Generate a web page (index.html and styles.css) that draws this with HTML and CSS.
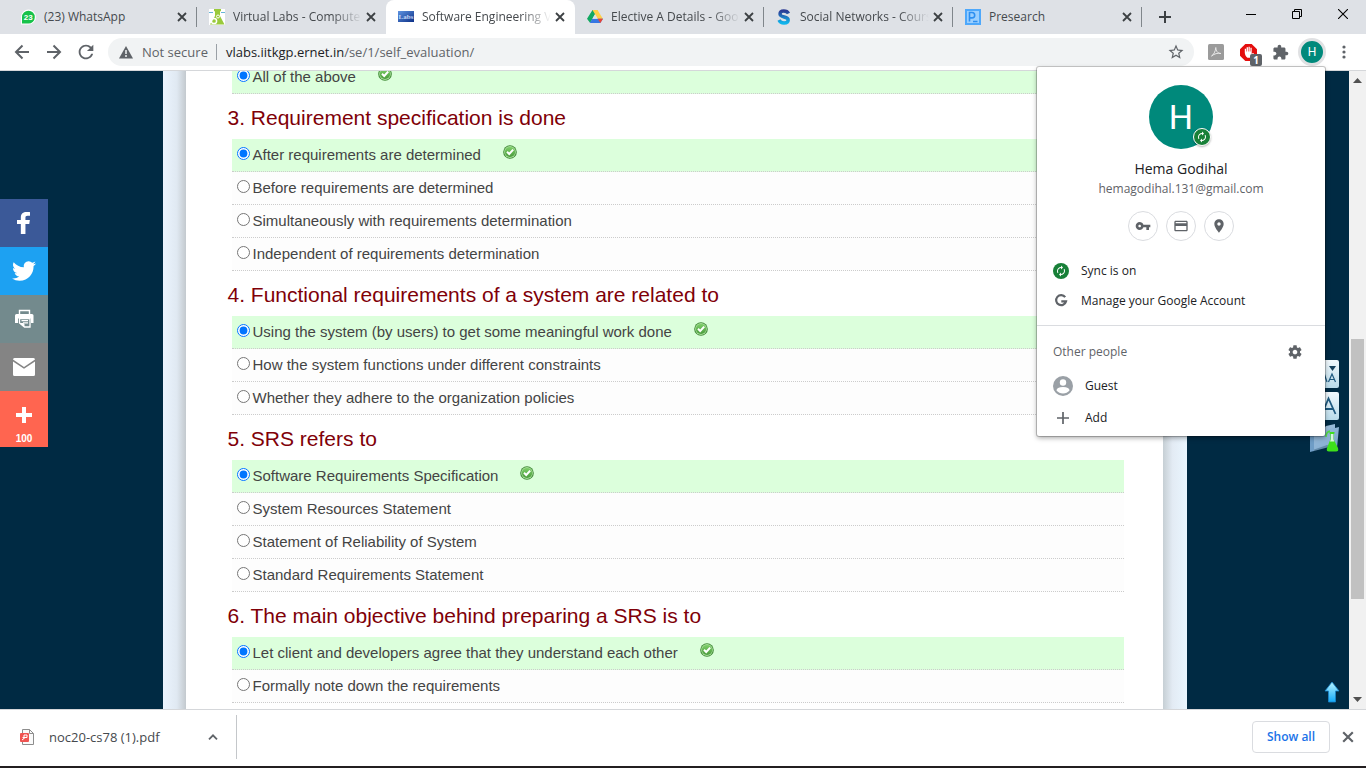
FILE: index.html
```html
<!DOCTYPE html>
<html lang="en">
<head>
<meta charset="utf-8">
<title>Software Engineering Virtual Lab</title>
<link rel="stylesheet" href="styles.css">
</head>
<body>
<svg class="defs" width="0" height="0" aria-hidden="true">
  <defs>
    <linearGradient id="gCheck" x1="0" y1="0" x2="0" y2="1"><stop offset="0" stop-color="#7ed06a"/><stop offset="1" stop-color="#4a9a3c"/></linearGradient>
    <linearGradient id="gArrow" x1="0" y1="0" x2="0" y2="1"><stop offset="0" stop-color="#b8f4ff"/><stop offset="1" stop-color="#10a8f8"/></linearGradient>
    <linearGradient id="gBox" x1="0" y1="0" x2="0" y2="1"><stop offset="0" stop-color="#f2f9fd"/><stop offset="1" stop-color="#b9dbea"/></linearGradient>
    <linearGradient id="gFolder" x1="0" y1="0" x2="1" y2="1"><stop offset="0" stop-color="#b5d0e6"/><stop offset="1" stop-color="#6d9cc4"/></linearGradient>
    <linearGradient id="gLabs" x1="0" y1="0" x2="1" y2="1"><stop offset="0" stop-color="#5f94e2"/><stop offset="1" stop-color="#0b2f86"/></linearGradient>
    <linearGradient id="gSwayam" x1="0" y1="0" x2="0" y2="1"><stop offset="0" stop-color="#2d3c95"/><stop offset="1" stop-color="#10b5ec"/></linearGradient>
    <symbol id="x" viewBox="0 0 10 10"><path d="M1 1l8 8M9 1l-8 8" fill="none" stroke="currentColor" stroke-width="1.8"/></symbol>
    <symbol id="check" viewBox="0 0 14 14"><circle cx="7" cy="7" r="6.8" fill="#3f8a35"/><circle cx="7" cy="7" r="5.9" fill="#a5dc98"/><circle cx="7" cy="7" r="5.1" fill="url(#gCheck)"/><path d="M4 6.800l2.200 2.200L10.200 4.600" fill="none" stroke="#fff" stroke-width="2"/></symbol>
    <symbol id="sync" viewBox="0 0 24 24"><path fill="currentColor" d="M12 6v3l4-4-4-4v3c-4.420 0-8 3.580-8 8 0 1.570.460 3.030 1.240 4.260L6.700 14.800c-.450-.830-.700-1.790-.700-2.800 0-3.310 2.690-6 6-6zm6.760 1.740L17.300 9.200c.440.840.700 1.790.700 2.800 0 3.310-2.690 6-6 6v-3l-4 4 4 4v-3c4.420 0 8-3.580 8-8 0-1.570-.460-3.030-1.240-4.260z"/></symbol>
  </defs>
</svg>

<header class="tabstrip">
  <nav class="tabs" aria-label="Tabs">
    <div class="tab">
      <svg class="favicon" viewBox="0 0 16 16"><path d="M1 15.500V8a7.500 7.500 0 1 1 7.500 7.500z" fill="#fff"/><path d="M2 14.500V8a6.400 6.400 0 1 1 6.400 6.500z" fill="#17c24a"/><text x="8.200" y="11" text-anchor="middle" class="fav-num">23</text></svg>
      <a class="tab-title" href="#">(23) WhatsApp</a>
      <button class="tab-close" aria-label="Close"><svg width="10" height="10"><use href="#x"/></svg></button>
    </div>
    <div class="tab tab-before-active">
      <svg class="favicon" viewBox="0 0 16 16"><path fill="#fff" d="M0 0h16v16H0z"/><path d="M0 3.500h4M12 3.500h4" stroke="#66b5d8"/><path d="M5 0h7v2l-1 .5v4.500l4.500 8.500H1L6 7V2.500L5 2z" fill="#9aca3c"/><circle cx="5" cy="12" r="2.600" fill="none" stroke="#fff" stroke-width="1.500"/><circle cx="9" cy="7.500" r="1.500" fill="none" stroke="#fff"/></svg>
      <a class="tab-title tab-title-long" href="#">Virtual Labs - Compute</a>
      <button class="tab-close" aria-label="Close"><svg width="10" height="10"><use href="#x"/></svg></button>
    </div>
    <div class="tab tab-active">
      <svg class="favicon" viewBox="0 0 16 16"><path fill="url(#gLabs)" d="M0 2h16v11H0z"/><text x="8" y="10" text-anchor="middle" class="fav-labs">Labs</text></svg>
      <a class="tab-title tab-title-long" href="#">Software Engineering V</a>
      <button class="tab-close" aria-label="Close"><svg width="10" height="10"><use href="#x"/></svg></button>
    </div>
    <div class="tab">
      <svg class="favicon" viewBox="0 0 16 16"><path d="M5.500 1h5L8 5.300 3.200 14 0 9.800z" fill="#11a861"/><path d="M5.500 1h5L16 10h-5.200z" fill="#ffcf48"/><path d="M5.300 9.800H16L13.300 14H2.800z" fill="#3777e3"/><path d="M5.300 9.800L8 5.300l2.700 4.500z" fill="#dee1e6"/><path d="M10.700 9.800H16L13.300 14z" fill="#ea4335"/></svg>
      <a class="tab-title tab-title-long" href="#">Elective A Details - Goo</a>
      <button class="tab-close" aria-label="Close"><svg width="10" height="10"><use href="#x"/></svg></button>
    </div>
    <div class="tab">
      <svg class="favicon" viewBox="0 0 16 16"><path d="M12.500 4.500C11.500 2.500 9.500 2 7.800 2 5.500 2 4 3.200 4 5c0 4 8.200 2 8.200 6 0 2-1.700 3-4.200 3-2.200 0-4-.700-5-3" fill="none" stroke="url(#gSwayam)" stroke-width="3.400"/></svg>
      <a class="tab-title tab-title-long" href="#">Social Networks - Cours</a>
      <button class="tab-close" aria-label="Close"><svg width="10" height="10"><use href="#x"/></svg></button>
    </div>
    <div class="tab">
      <svg class="favicon" viewBox="0 0 16 16"><path fill="#4ea8fb" d="M0 0h16v16H0z"/><path d="M2 2h12v12H2z" fill="#9bcfff"/><path d="M4.500 12.500v-9H7a2.700 2.700 0 0 1 0 5.400H5M8 12.500h4.500" fill="none" stroke="#2d8ff0" stroke-width="1.600"/></svg>
      <a class="tab-title" href="#">Presearch</a>
      <button class="tab-close" aria-label="Close"><svg width="10" height="10"><use href="#x"/></svg></button>
    </div>
    <button class="new-tab" aria-label="New tab"><svg width="12" height="12" viewBox="0 0 12 12"><path d="M6 0v12M0 6h12" stroke="#3c4043" stroke-width="2"/></svg></button>
  </nav>
  <div class="window-controls">
    <button aria-label="Minimize"><svg width="10" height="10"><path d="M0 5.500h10" stroke="#000"/></svg></button>
    <button aria-label="Restore"><svg width="10" height="10"><path d="M.5 2.500h7v7h-7zM2.500 2.500v-2h7v7h-2" fill="none" stroke="#000"/></svg></button>
    <button aria-label="Close window"><svg width="10" height="10"><path d="M0 0l10 10M10 0L0 10" stroke="#000" stroke-width="1.100"/></svg></button>
  </div>
</header>

<div class="toolbar">
  <div class="tool-group">
    <button class="tool" aria-label="Back"><svg width="16" height="16" viewBox="0 0 16 16"><path d="M15 8H2M8.500 1.500L2 8l6.500 6.500" fill="none" stroke="#5f6368" stroke-width="2"/></svg></button>
    <button class="tool" aria-label="Forward"><svg width="16" height="16" viewBox="0 0 16 16"><path d="M1 8h13M7.500 1.500L14 8l-6.500 6.500" fill="none" stroke="#5f6368" stroke-width="2"/></svg></button>
    <button class="tool" aria-label="Reload"><svg width="22" height="22" viewBox="0 0 24 24"><path fill="#5f6368" d="M17.650 6.350C16.200 4.900 14.210 4 12 4c-4.420 0-7.990 3.580-7.990 8s3.570 8 7.990 8c3.730 0 6.840-2.550 7.730-6h-2.080c-.820 2.330-3.040 4-5.650 4-3.310 0-6-2.690-6-6s2.690-6 6-6c1.660 0 3.140.690 4.220 1.780L13 11h7V4l-2.350 2.350z"/></svg></button>
  </div>
  <div class="omnibox">
    <svg width="14" height="14" viewBox="0 0 14 14"><path d="M7 1l7 12.500H0z" fill="#5f6368"/><path d="M7 5v4M7 10v2" stroke="#f1f3f4" stroke-width="1.500"/></svg>
    <span class="insecure">Not secure</span>
    <span class="url"><span class="url-host">vlabs.iitkgp.ernet.in</span>/se/1/self_evaluation/</span>
    <button class="star" aria-label="Bookmark this page"><svg width="18" height="18" viewBox="0 0 24 24"><path fill="#5f6368" d="M22 9.240l-7.190-.620L12 2 9.190 8.630 2 9.240l5.460 4.730L5.820 21 12 17.270 18.180 21l-1.630-7.030L22 9.240zM12 15.400l-3.760 2.270 1-4.280-3.320-2.880 4.380-.380L12 6.100l1.710 4.040 4.380.380-3.320 2.880 1 4.280L12 15.400z"/></svg></button>
  </div>
  <div class="tool-group">
    <button class="tool" aria-label="PDF extension"><svg width="16" height="16" viewBox="0 0 16 16"><rect width="16" height="16" rx="1.500" fill="#9b9b9b"/><path d="M3.500 12c2-1 4-4.500 4.300-8.500C8 7 9.500 9.500 13 9.500c-3.500-.8-6.500.3-9.500 2.500z" fill="none" stroke="#e9e9e9"/></svg></button>
    <button class="tool tool-badged" aria-label="Ad blocker"><svg width="17" height="17" viewBox="0 0 16 16"><path d="M5 0h6l5 5v6l-5 5H5l-5-5V5z" fill="#e40d0d"/><path d="M4.500 8V4.500h1.200V7h.5V3h1.300v4H8V2.500h1.200V7h.6V3.500H11v6.200l1-1.200 1.200.5L10.500 13H7c-1.500-1-2.500-3-2.500-5z" fill="#fff"/></svg><span class="badge">1</span></button>
    <button class="tool" aria-label="Extensions"><svg width="17" height="17" viewBox="0 0 24 24"><path fill="#5f6368" d="M20.500 11H19V7c0-1.100-.900-2-2-2h-4V3.500C13 2.120 11.880 1 10.500 1S8 2.120 8 3.500V5H4c-1.100 0-1.990.900-1.990 2v3.800H3.500c1.490 0 2.700 1.210 2.700 2.700s-1.210 2.700-2.700 2.700H2V20c0 1.100.900 2 2 2h3.800v-1.500c0-1.490 1.210-2.700 2.700-2.700 1.490 0 2.700 1.210 2.700 2.700V22H17c1.100 0 2-.900 2-2v-4h1.500c1.380 0 2.500-1.120 2.500-2.500S21.880 11 20.500 11z"/></svg></button>
    <button class="tool" aria-label="Profile"><span class="avatar avatar-small">H</span></button>
    <button class="tool" aria-label="Menu"><svg width="4" height="14" viewBox="0 0 4 14"><g fill="#5f6368"><circle cx="2" cy="2" r="1.600"/><circle cx="2" cy="7" r="1.600"/><circle cx="2" cy="12" r="1.600"/></g></svg></button>
  </div>
</div>

<div class="viewport">
  <div class="page">
    <aside class="share" aria-label="Share">
      <a class="share-fb" href="#" aria-label="Facebook"><svg width="32" height="32" viewBox="0 0 32 32"><path fill="#fff" d="M22 5.160c-.406-.054-1.806-.160-3.430-.160-3.400 0-5.733 1.825-5.733 5.170v2.882H9v3.913h3.837V27h4.604V16.965h3.823l.587-3.913h-4.410v-2.500c0-1.123.347-1.903 2.198-1.903H22V5.160z"/></svg></a>
      <a class="share-tw" href="#" aria-label="Twitter"><svg width="32" height="32" viewBox="0 0 32 32"><path fill="#fff" d="M28 8.557a9.913 9.913 0 0 1-2.828.775 4.930 4.930 0 0 0 2.166-2.725 9.738 9.738 0 0 1-3.130 1.194 4.920 4.920 0 0 0-3.593-1.550 4.924 4.924 0 0 0-4.794 6.049c-4.090-.210-7.720-2.170-10.150-5.150a4.942 4.942 0 0 0-.665 2.477c0 1.710.870 3.214 2.190 4.100a4.968 4.968 0 0 1-2.230-.616v.060c0 2.390 1.700 4.380 3.952 4.830-.414.115-.850.174-1.297.174-.318 0-.626-.030-.928-.086a4.935 4.935 0 0 0 4.600 3.420 9.893 9.893 0 0 1-6.114 2.107c-.398 0-.790-.023-1.175-.068a13.953 13.953 0 0 0 7.550 2.213c9.056 0 14.010-7.507 14.010-14.013 0-.213-.005-.426-.015-.637.960-.695 1.795-1.560 2.455-2.550z"/></svg></a>
      <a class="share-print" href="#" aria-label="Print"><svg width="32" height="32" viewBox="0 0 32 32"><path d="M11.500 11V7.500h10V11" fill="none" stroke="#fff" stroke-width="1.400"/><path fill="#fff" d="M7 12.500Q7 11 8.500 11h15.500q1.500 0 1.500 1.500V20H23v-4.500H10V20H7z"/><path d="M11.500 15.500h10.500V24h-5.500l-5-4z" fill="#738a8d" stroke="#fff" stroke-width="1.300"/><path d="M13.500 17.700h6.500M15 19.900h5" stroke="#fff" stroke-width="1.200"/><path d="M11.500 20h3.500q1.500 0 1.500 1.500V24z" fill="#fff"/></svg></a>
      <a class="share-mail" href="#" aria-label="Email"><svg width="32" height="32" viewBox="0 0 32 32"><path fill="#fff" d="M5 8.500Q5 7 6.500 7h19Q27 7 27 8.500L16 16z"/><path fill="#fff" d="M5 10.500l11 7.300 11-7.300V23.500q0 1.500-1.500 1.500h-19Q5 25 5 23.500z"/></svg></a>
      <a class="share-more" href="#"><svg width="16" height="16" viewBox="0 0 16 16"><path d="M8 0v16M0 8h16" stroke="#fff" stroke-width="4"/></svg><span>100</span></a>
    </aside>

    <div class="shell">
      <main class="quiz">
        <form>
          <fieldset>
            <label class="option correct"><input type="radio" name="q2" checked>All of the above<svg class="check"><use href="#check"/></svg></label>
          </fieldset>
          <fieldset>
            <legend>3. Requirement specification is done</legend>
            <label class="option correct"><input type="radio" name="q3" checked>After requirements are determined<svg class="check"><use href="#check"/></svg></label>
            <label class="option"><input type="radio" name="q3">Before requirements are determined</label>
            <label class="option"><input type="radio" name="q3">Simultaneously with requirements determination</label>
            <label class="option"><input type="radio" name="q3">Independent of requirements determination</label>
          </fieldset>
          <fieldset>
            <legend>4. Functional requirements of a system are related to</legend>
            <label class="option correct"><input type="radio" name="q4" checked>Using the system (by users) to get some meaningful work done<svg class="check"><use href="#check"/></svg></label>
            <label class="option"><input type="radio" name="q4">How the system functions under different constraints</label>
            <label class="option"><input type="radio" name="q4">Whether they adhere to the organization policies</label>
          </fieldset>
          <fieldset>
            <legend>5. SRS refers to</legend>
            <label class="option correct"><input type="radio" name="q5" checked>Software Requirements Specification<svg class="check"><use href="#check"/></svg></label>
            <label class="option"><input type="radio" name="q5">System Resources Statement</label>
            <label class="option"><input type="radio" name="q5">Statement of Reliability of System</label>
            <label class="option"><input type="radio" name="q5">Standard Requirements Statement</label>
          </fieldset>
          <fieldset>
            <legend>6. The main objective behind preparing a SRS is to</legend>
            <label class="option correct"><input type="radio" name="q6" checked>Let client and developers agree that they understand each other<svg class="check"><use href="#check"/></svg></label>
            <label class="option"><input type="radio" name="q6">Formally note down the requirements</label>
          </fieldset>
        </form>
      </main>
    </div>

    <div class="side-tools">
      <button aria-label="Smaller text"><svg width="28" height="28" viewBox="0 0 28 28"><rect width="28" height="28" rx="2" fill="url(#gBox)"/><path d="M18 6h7l-3.500 5z" fill="#17415c"/><path d="M17.500 22l3.500-8 3.500 8M18.500 19.500h5M8 22l4-12 4 12M9.500 18h5" fill="none" stroke="#1f5a80" stroke-width="1.200"/></svg></button>
      <button aria-label="Normal text"><svg width="28" height="28" viewBox="0 0 28 28"><rect width="28" height="28" rx="2" fill="url(#gBox)"/><path d="M11 22l6.500-15.500L24.500 22M13.500 17h8.500" fill="none" stroke="#1f5a80" stroke-width="1.800"/></svg></button>
      <button class="resources" aria-label="Lab resources"><svg width="30" height="30" viewBox="0 0 30 30"><path d="M1 9l14-4 2-2 9-2v4l4-1-2 21-10-3-17 6z" fill="url(#gFolder)"/><path d="M1 9l4 1v18l-4 1z" fill="#6f9dc6"/><path d="M5 10l21-5-2 18-19 5z" fill="#8db4d6" opacity=".7"/><path d="M20.500 9h5v1.500l-1 .5v5l4.500 9q1 3.500-2 3.500h-7q-3 0-2-3.500l3.500-9v-5l-1-.5z" fill="#3ee01a"/><path d="M22 11h2.300v5l1 2.500h-4.300l1-2.500z" fill="#d6f5de"/><path d="M17 14q0-5 4-6" fill="none" stroke="#4fe040" stroke-width="1.500"/></svg></button>
    </div>
    <a class="to-top" href="#" aria-label="Back to top"><svg width="16" height="22" viewBox="0 0 16 22"><path d="M8 1l7 9h-3.500v11h-7V10H1z" fill="url(#gArrow)" stroke="#1b86cc" stroke-width=".8"/></svg></a>
  </div>
  <div class="scrollbar" aria-hidden="true">
    <svg width="9" height="5"><path d="M0 5l4.500-5L9 5z" fill="#505050"/></svg>
    <div class="track"><div class="thumb"></div></div>
    <svg width="9" height="5"><path d="M0 0l4.500 5L9 0z" fill="#505050"/></svg>
  </div>
</div>

<footer class="shelf">
  <button class="download"><svg width="14" height="16" viewBox="0 0 14 16"><path d="M2.500.5h7l4 4v11h-11z" fill="#fafafa" stroke="#8d8d8d"/><path d="M9.500.5v4h4" fill="none" stroke="#8d8d8d"/><rect y="4" width="9" height="9" rx="1" fill="#ef5350"/><path d="M2 11l2-1.500M4 10V6h3v2.500H2.500" fill="none" stroke="#fff"/></svg><span>noc20-cs78 (1).pdf</span></button>
  <button class="chevron" aria-label="Download options"><svg width="10" height="6" viewBox="0 0 10 6"><path d="M1 5.300l4-4 4 4" fill="none" stroke="#5f6368" stroke-width="1.800"/></svg></button>
  <button class="show-all">Show all</button>
  <button class="shelf-close" aria-label="Close downloads"><svg width="12" height="12"><use href="#x"/></svg></button>
</footer>

<section class="profile" aria-label="Profile">
  <div class="profile-card">
    <div class="avatar avatar-large">H<span class="sync-badge"><svg width="12" height="12"><use href="#sync"/></svg></span></div>
    <h2>Hema Godihal</h2>
    <p>hemagodihal.131@gmail.com</p>
    <div class="shortcuts">
      <button aria-label="Passwords"><svg width="16" height="16" viewBox="0 0 24 24"><path fill="#5f6368" d="M12.650 10C11.830 7.670 9.610 6 7 6c-3.310 0-6 2.690-6 6s2.690 6 6 6c2.610 0 4.830-1.670 5.650-4H17v4h4v-4h2v-4H12.650zM7 14c-1.100 0-2-.900-2-2s.900-2 2-2 2 .900 2 2-.900 2-2 2z"/></svg></button>
      <button aria-label="Payment methods"><svg width="16" height="16" viewBox="0 0 24 24"><path fill="#5f6368" d="M20 4H4c-1.110 0-1.990.890-1.990 2L2 18c0 1.110.890 2 2 2h16c1.110 0 2-.890 2-2V6c0-1.110-.890-2-2-2zm0 14H4v-6h16v6zm0-10H4V6h16v2z"/></svg></button>
      <button aria-label="Addresses"><svg width="16" height="16" viewBox="0 0 24 24"><path fill="#5f6368" d="M12 2C8.130 2 5 5.130 5 9c0 5.250 7 13 7 13s7-7.750 7-13c0-3.870-3.130-7-7-7zm0 9.500c-1.380 0-2.500-1.120-2.500-2.500s1.120-2.500 2.500-2.500 2.500 1.120 2.500 2.500-1.120 2.500-2.500 2.500z"/></svg></button>
    </div>
  </div>
  <div class="account-links">
    <button><span class="sync-dot"><svg width="12" height="12"><use href="#sync"/></svg></span>Sync is on</button>
    <button><svg width="16" height="16" viewBox="0 0 16 16"><path d="M12.200 4.200A5 5 0 1 0 13 8.400H8.300" fill="none" stroke="#5f6368" stroke-width="2.200"/></svg>Manage your Google Account</button>
  </div>
  <div class="people">
    <div class="people-head"><span>Other people</span><button aria-label="Manage people"><svg width="16" height="16" viewBox="0 0 24 24"><path fill="#5f6368" d="M19.430 12.980c.040-.320.070-.640.070-.980s-.030-.660-.070-.980l2.110-1.650c.190-.150.240-.420.120-.640l-2-3.460c-.120-.220-.390-.300-.610-.220l-2.490 1c-.520-.400-1.080-.730-1.690-.980l-.380-2.650C14.460 2.180 14.250 2 14 2h-4c-.250 0-.460.180-.490.420l-.380 2.650c-.610.250-1.170.590-1.690.980l-2.490-1c-.230-.090-.490 0-.610.220l-2 3.460c-.130.220-.070.490.120.640l2.110 1.650c-.040.320-.070.650-.070.980s.030.660.070.980l-2.110 1.650c-.190.150-.240.420-.120.640l2 3.460c.120.220.390.300.610.220l2.490-1c.520.400 1.080.730 1.690.980l.380 2.650c.030.240.240.420.490.420h4c.250 0 .460-.180.490-.420l.380-2.650c.610-.250 1.170-.590 1.690-.980l2.490 1c.230.090.490 0 .610-.220l2-3.460c.120-.220.070-.490-.120-.640l-2.110-1.650zM12 15.500c-1.930 0-3.500-1.570-3.500-3.500s1.570-3.500 3.500-3.500 3.500 1.570 3.500 3.500-1.570 3.500-3.500 3.500z"/></svg></button></div>
    <button class="person"><svg width="20" height="20" viewBox="0 0 20 20"><circle cx="10" cy="10" r="10" fill="#9aa0a6"/><circle cx="10" cy="6.500" r="3.200" fill="#fff"/><path d="M3.500 14.500q0-3.500 6.500-3.500t6.500 3.500Q14 17.500 10 17.500t-6.500-3z" fill="#fff"/></svg>Guest</button>
    <button class="person"><svg width="20" height="20" viewBox="0 0 20 20"><path d="M10 4v12M4 10h12" stroke="#5f6368" stroke-width="1.700"/></svg>Add</button>
  </div>
</section>
</body>
</html>
```
FILE: styles.css
```css
* {
  box-sizing: border-box;
}

body {
  position: relative;
  display: flex;
  flex-direction: column;
  height: 100vh;
  margin: 0;
  overflow: hidden;
  color: #202124;
  font-family: "Open Sans", "Noto Sans", sans-serif;
  font-size: 12px;
  line-height: 16px;
}

button {
  display: flex;
  align-items: center;
  justify-content: center;
  padding: 0;
  border: 0;
  background: none;
  color: inherit;
  font: inherit;
}

a {
  color: inherit;
  text-decoration: none;
}

.defs {
  position: absolute;
}

/* Tab strip */
.tabstrip {
  display: flex;
  flex: none;
  justify-content: space-between;
  height: 34px;
  background: #dee1e6;
}

.tabs {
  display: flex;
  flex: 1;
  padding-left: 8px;
}

.tab {
  display: flex;
  flex: 0 1 189px;
  align-items: center;
  gap: 8px;
  min-width: 0;
  padding: 0 8px 0 12px;
  background: linear-gradient(#80868b, #80868b) right center / 1px 20px no-repeat;
  color: #45494d;
}

.tab-active {
  border-radius: 8px 8px 0 0;
  background: #fff;
}

.tab-before-active {
  background: none;
}

.favicon {
  flex: none;
  width: 16px;
  height: 16px;
}

.fav-num {
  fill: #fff;
  font: bold 8px "Liberation Sans", sans-serif;
}

.fav-labs {
  fill: #c5d8f7;
  font: bold 7px "Liberation Serif", serif;
}

.tab-title {
  flex: 1;
  min-width: 0;
  overflow: hidden;
  white-space: nowrap;
}

.tab-title-long {
  margin-right: -8px;
  mask-image: linear-gradient(90deg, #000 calc(100% - 32px), transparent calc(100% - 2px));
}

.tab-close {
  flex: none;
  width: 14px;
  height: 16px;
  color: #3c4043;
}

.new-tab {
  width: 28px;
  height: 34px;
  margin-left: 9px;
}

.window-controls {
  display: flex;
  height: 28px;
}

.window-controls button {
  width: 46px;
}

/* Toolbar */
.toolbar {
  display: flex;
  flex: none;
  align-items: center;
  gap: 6px;
  height: 37px;
  padding: 0 6px;
  border-bottom: 1px solid #d5d7da;
  background: #fff;
}

.tool-group {
  display: flex;
}

.tool {
  width: 32px;
  height: 28px;
}

.tool-badged {
  position: relative;
}

.badge {
  position: absolute;
  right: 2px;
  bottom: 0;
  width: 12px;
  height: 12px;
  border-radius: 2px;
  background: #5f6368;
  color: #fff;
  font-size: 10px;
  font-weight: 700;
  line-height: 12px;
}

.omnibox {
  display: flex;
  flex: 1;
  align-items: center;
  height: 28px;
  padding: 0 9px 0 11px;
  border-radius: 14px;
  background: #f1f3f4;
  color: #5f6368;
  font-size: 13px;
  line-height: 20px;
}

.insecure {
  margin-left: 9px;
  padding-right: 8px;
  border-right: 1px solid #9aa0a6;
  line-height: 16px;
}

.url {
  flex: 1;
  margin-left: 9px;
}

.url-host {
  color: #202124;
}

.avatar {
  display: flex;
  align-items: center;
  justify-content: center;
  border-radius: 50%;
  background: #00897b;
  color: #fff;
  font-family: Roboto, sans-serif;
}

.avatar-small {
  width: 28px;
  height: 28px;
  border: 3px solid #e0e1e3;
  font-size: 12px;
}

/* Page */
.viewport {
  display: flex;
  flex: 1;
  min-height: 0;
}

.page {
  position: relative;
  flex: 1;
  overflow: hidden;
  background: #002a43;
}

.shell {
  max-width: 1024px;
  height: 100%;
  margin: 0 auto;
  padding: 0 24px 0 23px;
  background:
    linear-gradient(90deg, #ebf4fe, #e0e9f2 60%, #c3c9ce) left / 23px 100% no-repeat,
    linear-gradient(270deg, #eaf6ff, #e3ebf4 60%, #c6cfd4) right / 24px 100% no-repeat;
}

.quiz {
  display: flow-root;
  height: 100%;
  padding: 0 39px 0 42px;
  background: #fff;
  color: #444;
  font-family: "Liberation Sans", Arial, sans-serif;
  font-size: 15px;
}

.quiz form {
  margin-top: -10px;
}

fieldset {
  min-width: 0;
  margin: 0;
  padding: 0;
  border: 0;
}

legend {
  display: block;
  height: 45px;
  padding: 0;
  color: #800008;
  font-size: 21px;
  line-height: 48px;
  white-space: nowrap;
}

.option {
  display: flex;
  align-items: center;
  height: 33px;
  margin-left: 4px;
  padding-left: 5px;
  border-bottom: 1px dotted #ccc;
  background: #fdfdfd;
}

.option.correct {
  background: #dcffdc;
}

.option input {
  width: 13px;
  height: 13px;
  margin: 0 3px 3px 0;
}

.check {
  width: 14px;
  height: 14px;
  margin: 0 0 6px 22px;
}

.share {
  position: absolute;
  top: 128px;
  left: 0;
  width: 48px;
}

.share a {
  display: flex;
  flex-direction: column;
  align-items: center;
  justify-content: center;
  height: 48px;
}

.share-fb {
  background: #3b5998;
}

.share-tw {
  background: #1da1f2;
}

.share-print {
  background: #738a8d;
}

.share-mail {
  background: #848484;
}

.share a.share-more {
  gap: 9px;
  height: 56px;
  padding-top: 15px;
  background: #ff6550;
  color: #fff;
  font: bold 10px/14px "Liberation Sans", Arial, sans-serif;
}

.side-tools {
  position: absolute;
  top: 289px;
  right: 10px;
  display: flex;
  flex-direction: column;
  gap: 4px;
  align-items: flex-end;
}

.side-tools .resources {
  height: 28px;
}

.to-top {
  position: absolute;
  right: 9px;
  bottom: 6px;
  display: flex;
}

.scrollbar {
  display: flex;
  flex-direction: column;
  align-items: center;
  width: 17px;
  padding: 7px 0;
  background: #f1f1f1;
}

.track {
  flex: 1;
  width: 13px;
  padding: 5px 0;
}

.thumb {
  height: 43%;
  margin-top: 251px;
  background: #c1c1c1;
}

/* Download shelf */
.shelf {
  display: flex;
  flex: none;
  align-items: center;
  height: 59px;
  padding: 0 12px 2px 20px;
  border-top: 1px solid #d5d7da;
  border-bottom: 2px solid #231f20;
  background: #fff;
}

.download {
  gap: 15px;
  color: #45494d;
  font-size: 13px;
}

.chevron {
  width: 77px;
  height: 44px;
  padding-left: 30px;
  border-right: 1px solid #c4c7ca;
}

.show-all {
  width: 78px;
  height: 32px;
  margin-left: auto;
  border: 1px solid #dadce0;
  border-radius: 4px;
  color: #1a73e8;
  font-weight: 600;
}

.shelf-close {
  margin-left: 12px;
  color: #5f6368;
}

/* Profile menu */
.profile {
  position: absolute;
  top: 67px;
  right: 41px;
  width: 288px;
  padding-bottom: 2px;
  border-radius: 2px;
  background: #fff;
  box-shadow: 0 0 0 1px rgba(0, 0, 0, .2), 0 2px 5px rgba(0, 0, 0, .35);
}

.profile-card {
  display: flex;
  flex-direction: column;
  align-items: center;
  padding: 18px 0 15px;
}

.avatar-large {
  position: relative;
  width: 64px;
  height: 64px;
  font-size: 34px;
}

.sync-badge {
  position: absolute;
  right: 2px;
  bottom: 3px;
  display: flex;
  align-items: center;
  justify-content: center;
  width: 18px;
  height: 18px;
  border: 1px solid #fff;
  border-radius: 50%;
  background: #188038;
  box-shadow: 0 1px 2px rgba(0, 0, 0, .3);
}

.profile-card h2 {
  margin: 10px 0 0;
  font-size: 14px;
  font-weight: 400;
  line-height: 20px;
}

.profile-card p {
  margin: 2px 0 14px;
  color: #5f6368;
}

.shortcuts {
  display: flex;
  gap: 8px;
}

.shortcuts button {
  width: 30px;
  height: 30px;
  border: 1px solid #dadce0;
  border-radius: 50%;
}

.account-links {
  padding-bottom: 9px;
  border-bottom: 1px solid #dadce0;
}

.account-links button {
  justify-content: flex-start;
  gap: 12px;
  width: 100%;
  height: 30px;
  padding: 0 16px;
}

.sync-dot {
  display: flex;
  align-items: center;
  justify-content: center;
  width: 16px;
  height: 16px;
  border-radius: 50%;
  background: #188038;
  color: #fff;
}

.people-head {
  display: flex;
  align-items: center;
  justify-content: space-between;
  height: 44px;
  padding: 8px 22px 0 16px;
  color: #5f6368;
}

.person {
  justify-content: flex-start;
  gap: 12px;
  width: 100%;
  height: 32px;
  padding: 0 16px;
}
```
